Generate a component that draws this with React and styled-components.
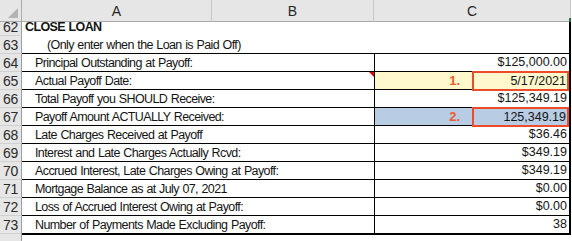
import React from 'react';
import styled, { createGlobalStyle, css } from 'styled-components';

const Global = createGlobalStyle`
  html, body { margin: 0; padding: 0; background: #fff; }
  body { font-family: "Liberation Sans", Arial, sans-serif; overflow: hidden; }
`;

const Sheet = styled.div`
  display: grid;
  grid-template-columns: 22px 190px 162px 197px;
  grid-auto-rows: 18px;
  width: 571px;
`;

const ColHead = styled.div`
  height: 22px;
  box-sizing: border-box;
  background: #e6e6e6;
  border-bottom: 1px solid #ababab;
  border-right: 1px solid #c8c8c8;
  color: #262626;
  font-size: 14px;
  display: flex;
  align-items: center;
  justify-content: center;
  position: relative;
  ${p => p.$last && css`
    &::after {
      content: '';
      position: absolute;
      right: -1px;
      bottom: -1px;
      width: 2px;
      height: 4px;
      background: #217346;
    }
  `}
`;

const Corner = styled(ColHead)`
  border-right: 1px solid #ababab;
  &::before {
    content: '';
    position: absolute;
    right: 3px;
    bottom: 3px;
    border-style: solid;
    border-width: 0 0 10px 10px;
    border-color: transparent transparent #b3b3b3 transparent;
  }
`;

const RowNum = styled.div`
  box-sizing: border-box;
  background: #e6e6e6;
  border-right: 1px solid #9e9e9e;
  border-bottom: 1px solid #d0d0d0;
  color: #2b2b2b;
  font-size: 14px;
  text-align: center;
  line-height: 18px;
  letter-spacing: -0.3px;
`;

const Label = styled.div`
  grid-column: span 2;
  box-sizing: border-box;
  position: relative;
  font-size: 12.5px;
  letter-spacing: -0.6px;
  word-spacing: 0.6px;
  line-height: 18px;
  color: #141414;
  white-space: nowrap;
  padding-left: ${p => p.$indent}px;
  font-weight: ${p => (p.$bold ? 700 : 400)};
  border-bottom: ${p => (p.$boxed ? '1px solid #000' : 'none')};
  ${p => p.$note && css`
    &::after {
      content: '';
      position: absolute;
      top: 0;
      right: 0;
      border-style: solid;
      border-width: 0 5px 5px 0;
      border-color: transparent #e00000 transparent transparent;
    }
  `}
`;

const Value = styled.div`
  box-sizing: border-box;
  font-size: 12.5px;
  line-height: 17px;
  color: #141414;
  background: ${p => p.$fill || 'transparent'};
  border-right: 2px solid #000;
  border-left: ${p => (p.$boxed ? '1px solid #000' : 'none')};
  border-bottom: ${p => (p.$boxed || p.$underline ? '1px solid #000' : 'none')};
  display: flex;
  align-items: center;
  justify-content: flex-end;
  padding-right: 2px;
  white-space: nowrap;
`;

const Marker = styled.span`
  color: #ef5a2a;
  font-weight: 700;
  font-size: 13px;
  margin-right: 12px;
`;

const Callout = styled.span`
  box-sizing: border-box;
  width: 97px;
  height: 20px;
  margin: 0 -2px -1px 0;
  border: 2px solid #ee4b2b;
  text-align: right;
  padding-right: 1px;
  line-height: 16px;
`;

const BottomEdge = styled.div`
  grid-column: 2 / span 3;
  border-top: 2px solid #000;
  margin-top: -1px;
`;

const data = [
  { n: 64, label: 'Principal Outstanding at Payoff:', value: '$125,000.00' },
  { n: 65, label: 'Actual Payoff Date:', value: '5/17/2021', fill: '#fff8cc', mark: '1.', note: true },
  { n: 66, label: 'Total Payoff you SHOULD Receive:', value: '$125,349.19' },
  { n: 67, label: 'Payoff Amount ACTUALLY Received:', value: '125,349.19', fill: '#b8cce4', mark: '2.' },
  { n: 68, label: 'Late Charges Received at Payoff', value: '$36.46' },
  { n: 69, label: 'Interest and Late Charges Actually Rcvd:', value: '$349.19' },
  { n: 70, label: 'Accrued Interest, Late Charges Owing at Payoff:', value: '$349.19' },
  { n: 71, label: 'Mortgage Balance as at July 07, 2021', value: '$0.00' },
  { n: 72, label: 'Loss of Accrued Interest Owing at Payoff:', value: '$0.00' },
  { n: 73, label: 'Number of Payments Made Excluding Payoff:', value: '38' },
];

export default function App() {
  return (
    <>
      <Global />
      <Sheet>
        <Corner />
        <ColHead>A</ColHead>
        <ColHead>B</ColHead>
        <ColHead $last>C</ColHead>

        <RowNum>62</RowNum>
        <Label $indent={3} $bold>CLOSE LOAN</Label>
        <Value />

        <RowNum>63</RowNum>
        <Label $indent={25} $boxed>(Only enter when the Loan is Paid Off)</Label>
        <Value $underline />

        {data.map(r => (
          <React.Fragment key={r.n}>
            <RowNum>{r.n}</RowNum>
            <Label $indent={13} $boxed $note={r.note}>{r.label}</Label>
            <Value $boxed $fill={r.fill}>
              {r.mark ? (
                <>
                  <Marker>{r.mark}</Marker>
                  <Callout>{r.value}</Callout>
                </>
              ) : r.value}
            </Value>
          </React.Fragment>
        ))}

        <RowNum />
        <BottomEdge />
      </Sheet>
    </>
  );
}
